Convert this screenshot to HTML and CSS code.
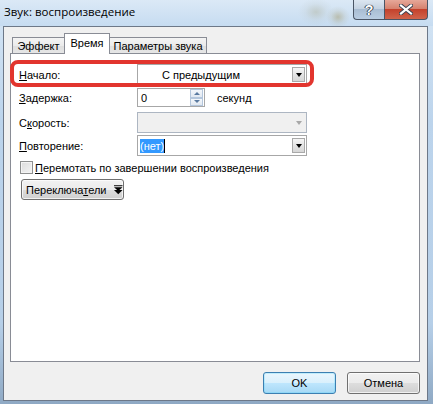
FILE: index.html
```html
<!DOCTYPE html>
<html lang="ru">
<head>
<meta charset="utf-8">
<title>Звук: воспроизведение</title>
<link rel="stylesheet" href="styles.css">
</head>
<body>
<div class="window">
  <div class="titlebar">
    <div class="title">Звук: воспроизведение</div>
    <div class="caption">
      <div class="cap-btn help">?</div>
      <div class="cap-btn close">
        <svg width="14" height="11" viewBox="0 0 14 11"><path d="M2 1.5 L12 9.5 M12 1.5 L2 9.5" stroke="#3a4250" stroke-width="4" stroke-linecap="square"/><path d="M2 1.5 L12 9.5 M12 1.5 L2 9.5" stroke="#ffffff" stroke-width="2.2" stroke-linecap="square"/></svg>
      </div>
    </div>
  </div>
  <div class="client">
    <div class="tabs">
      <div class="tab tab-effect">Эффект</div>
      <div class="tab tab-active">Время</div>
      <div class="tab tab-params">Параметры звука</div>
    </div>
    <div class="panel">
      <div class="row row-start">
        <div class="label"><u>Н</u>ачало:</div>
        <div class="combo combo-start">
          <span class="combo-text">С предыдущим</span>
          <span class="drop"><span class="tri"></span></span>
        </div>
        <div class="highlight"></div>
      </div>
      <div class="row row-delay">
        <div class="label"><u>З</u>адержка:</div>
        <div class="spin">
          <span class="spin-text">0</span>
          <span class="spin-btns">
            <span class="spin-btn"><span class="tri-up"></span></span>
            <span class="spin-btn"><span class="tri-dn"></span></span>
          </span>
        </div>
        <div class="unit">секунд</div>
      </div>
      <div class="row row-speed">
        <div class="label">С<u>к</u>орость:</div>
        <div class="combo combo-disabled">
          <span class="combo-text"></span>
          <span class="drop drop-disabled"><span class="tri tri-disabled"></span></span>
        </div>
      </div>
      <div class="row row-repeat">
        <div class="label"><u>П</u>овторение:</div>
        <div class="combo">
          <span class="combo-text repeat-text"><span class="sel">(нет)</span><span class="caret"></span></span>
          <span class="drop"><span class="tri"></span></span>
        </div>
      </div>
      <div class="row row-check">
        <span class="checkbox"></span>
        <span class="check-label"><u>П</u>еремотать по завершении воспроизведения</span>
      </div>
      <div class="row row-toggle">
        <div class="btn toggle-btn"><span>Переключа<u>т</u>ели</span>
          <svg width="9" height="10" viewBox="0 0 9 10"><rect x="0" y="0" width="9" height="1" fill="#000"/><path d="M0 2 H9 L4.5 6 Z" fill="#000"/><path d="M0 5 H9 L4.5 9.5 Z" fill="#000"/></svg>
        </div>
      </div>
    </div>
    <div class="actions">
      <div class="btn btn-default">OK</div>
      <div class="btn">Отмена</div>
    </div>
  </div>
</div>
</body>
</html>
```

FILE: styles.css
```css
* { box-sizing: border-box; }
html, body { margin: 0; padding: 0; }
body {
  width: 433px;
  height: 404px;
  overflow: hidden;
  font-family: "Liberation Sans", Arial, sans-serif;
  font-size: 11px;
  color: #000;
  background: linear-gradient(180deg, #d6e6f5 0%, #bcd4ec 30%, #b6cfe8 80%, #8fa9c4 100%);
}
.window {
  display: flex;
  flex-direction: column;
  height: 404px;
}
.titlebar {
  height: 26px;
  display: flex;
  justify-content: space-between;
  align-items: flex-start;
  padding: 0 5px 0 4px;
  background:
    radial-gradient(ellipse 18px 14px at 316px 12px, rgba(180,185,170,0.55), rgba(190,200,200,0.2) 60%, rgba(198,220,241,0) 100%),
    radial-gradient(ellipse 12px 11px at 338px 17px, rgba(165,155,110,0.5), rgba(180,180,160,0.2) 60%, rgba(198,220,241,0) 100%),
    linear-gradient(180deg, #dbe9f6 0%, #c6dcf1 100%);
}
.title {
  font-family: "Open Sans", "Noto Sans", sans-serif;
  font-size: 11.5px;
  line-height: 24px;
  color: #000;
}
.caption {
  display: flex;
}
.cap-btn {
  height: 20px;
  display: flex;
  align-items: center;
  justify-content: center;
  border: 1px solid #4a5565;
  border-top: none;
}
.help {
  width: 31px;
  border-radius: 0 0 0 4px;
  border-right: none;
  background: linear-gradient(180deg, #dce6f1 0%, #c5d3e2 45%, #a9bdd3 50%, #b9cde2 100%);
  font-family: "Liberation Sans", sans-serif;
  font-weight: bold;
  font-size: 14px;
  color: #fff;
  text-shadow: 0 0 1px #2a3544, 0 0 1px #2a3544, 1px 0 0 #4a5565, -1px 0 0 #4a5565;
}
.close {
  width: 44px;
  border-radius: 0 0 4px 0;
  background: linear-gradient(180deg, #e6a899 0%, #d6826f 45%, #c4422c 50%, #d0644c 100%);
}
.client {
  flex: 1;
  margin: 0 5px 3px 3px;
  border: 1px solid #6d7888;
  background: #f0f0f0;
  display: flex;
  flex-direction: column;
  padding: 6px 7px 6px 6px;
}
.tabs {
  display: flex;
  align-items: flex-end;
  height: 20px;
  padding-left: 2px;
}
.tab {
  height: 16px;
  border: 1px solid #898c95;
  border-bottom: none;
  background: linear-gradient(180deg, #f4f4f4 0%, #ebebeb 50%, #dedede 51%, #e6e6e6 100%);
  line-height: 16px;
  text-align: center;
  white-space: nowrap;
}
.tab-effect { width: 52px; border-right: none; }
.tab-params { width: 97px; border-left: none; }
.tab-active {
  width: 46px;
  height: 21px;
  margin-bottom: -1px;
  background: #fff;
  position: relative;
  z-index: 1;
  line-height: 19px;
}
.panel {
  height: 309px;
  border: 1px solid #898c95;
  background: #fff;
  padding: 10px 8px 0 8px;
  display: flex;
  flex-direction: column;
}
.row {
  display: flex;
  align-items: center;
}
.label {
  width: 118px;
  flex: none;
}
.row-start { height: 21px; position: relative; }
.row-delay { height: 19px; margin-top: 3px; }
.row-speed { height: 21px; margin-top: 5px; }
.row-repeat { height: 21px; margin-top: 2px; }
.row-check { height: 13px; margin-top: 5px; }
.row-toggle { height: 21px; margin-top: 5px; }

.highlight {
  position: absolute;
  left: -9px;
  top: -4px;
  width: 304px;
  height: 27px;
  border: 4px solid #e2352e;
  border-radius: 8px;
  pointer-events: none;
}
.combo {
  width: 170px;
  height: 21px;
  border: 1px solid #a7a7a7;
  background: #fff;
  display: flex;
  align-items: center;
  justify-content: space-between;
  padding: 0 1px 0 0;
}
.combo-text {
  padding-left: 3px;
  white-space: nowrap;
  display: flex;
  align-items: center;
}
.combo-start .combo-text { padding-left: 24px; }
.drop {
  width: 13px;
  height: 15px;
  border: 1px solid #a9a9a9;
  background: linear-gradient(180deg, #f6f6f6 0%, #e4e4e4 50%, #d6d6d6 100%);
  display: flex;
  align-items: center;
  justify-content: center;
}
.tri {
  width: 0;
  height: 0;
  border-left: 3.5px solid transparent;
  border-right: 3.5px solid transparent;
  border-top: 4px solid #000;
}
.combo-disabled {
  border-color: #adb6c2;
  background: #f0f0f0;
}
.drop-disabled {
  border-color: transparent;
  background: transparent;
}
.tri-disabled { border-top-color: #a8a8a8; }
.repeat-text { padding-left: 2px; }
.sel {
  background: #3399ff;
  color: #fff;
  line-height: 14px;
}
.caret {
  width: 1px;
  height: 14px;
  background: #000;
}
.spin {
  width: 68px;
  height: 19px;
  border: 1px solid #a7a7a7;
  background: #fff;
  display: flex;
  align-items: center;
  justify-content: space-between;
  padding: 0 1px 0 3px;
}
.spin-btns {
  display: flex;
  flex-direction: column;
  width: 13px;
  height: 17px;
}
.spin-btn {
  flex: 1;
  border: 1px solid #b4c6dc;
  background: linear-gradient(180deg, #f4f7fb 0%, #e1e8f1 100%);
  display: flex;
  align-items: center;
  justify-content: center;
}
.tri-up {
  width: 0; height: 0;
  border-left: 3px solid transparent;
  border-right: 3px solid transparent;
  border-bottom: 3px solid #5a7aa0;
}
.tri-dn {
  width: 0; height: 0;
  border-left: 3px solid transparent;
  border-right: 3px solid transparent;
  border-top: 3px solid #5a7aa0;
}
.unit { margin-left: 12px; }
.checkbox {
  width: 13px;
  height: 13px;
  margin-left: 1px;
  border: 1px solid #8e8f8f;
  background: linear-gradient(135deg, #dcdcdc 0%, #f4f4f4 100%);
  box-shadow: inset 0 0 0 1px #f4f4f4;
  flex: none;
}
.check-label { margin-left: 2px; }
.btn {
  height: 22px;
  width: 73px;
  border: 1px solid #707070;
  border-radius: 3px;
  background: linear-gradient(180deg, #f2f2f2 0%, #ebebeb 50%, #dddddd 51%, #cfcfcf 100%);
  box-shadow: inset 0 0 0 1px rgba(255,255,255,0.7);
  display: flex;
  align-items: center;
  justify-content: center;
  white-space: nowrap;
}
.toggle-btn {
  width: 103px;
  height: 21px;
  margin-left: 2px;
  justify-content: flex-start;
  padding-left: 4px;
  gap: 8px;
}
.actions {
  margin-top: 10px;
  display: flex;
  justify-content: flex-end;
  gap: 11px;
}
.btn-default {
  border-color: #3c7fb1;
  background: linear-gradient(180deg, #eaf6fd 0%, #d9f0fc 50%, #bee6fd 51%, #a7d9f5 100%);
  box-shadow: inset 0 0 0 1px #48d4fd40;
}
```
